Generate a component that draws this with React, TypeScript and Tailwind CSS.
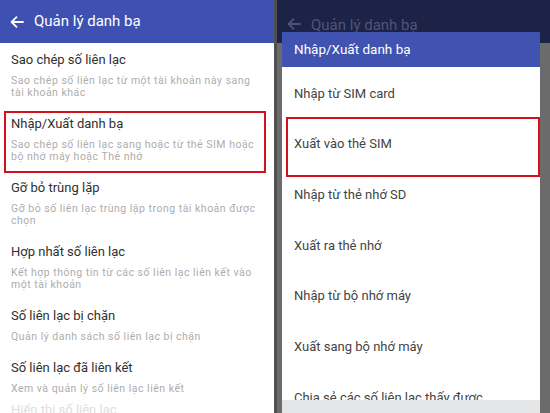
import React from "react";

const Arrow = ({ color }: { color: string }) => (
  <svg width="14" height="12" viewBox="0 0 14 12" fill="none">
    <path d="M13 6H2M6.5 1.2L1.6 6l4.9 4.8" stroke={color} strokeWidth="1.8" strokeLinecap="round" strokeLinejoin="round" />
  </svg>
);

const leftItems: { title: string; sub: string[]; boxed?: boolean }[] = [
  { title: "Sao chép số liên lạc", sub: ["Sao chép số liên lạc từ một tài khoản này sang", "tài khoản khác"] },
  { title: "Nhập/Xuất danh bạ", sub: ["Sao chép số liên lạc sang hoặc từ thẻ SIM hoặc", "bộ nhớ máy hoặc Thẻ nhớ"], boxed: true },
  { title: "Gỡ bỏ trùng lặp", sub: ["Gỡ bỏ số liên lạc trùng lặp trong tài khoản được", "chọn"] },
  { title: "Hợp nhất số liên lạc", sub: ["Kết hợp thông tin từ các số liên lạc liên kết vào", "một tài khoản"] },
  { title: "Số liên lạc bị chặn", sub: ["Quản lý danh sách số liên lạc bị chặn"] },
  { title: "Số liên lạc đã liên kết", sub: ["Xem và quản lý số liên lạc liên kết"] },
];

const dialogItems = [
  "Nhập từ SIM card",
  "Xuất vào thẻ SIM",
  "Nhập từ thẻ nhớ SD",
  "Xuất ra thẻ nhớ",
  "Nhập từ bộ nhớ máy",
  "Xuất sang bộ nhớ máy",
  "Chia sẻ các số liên lạc thấy được",
];

export default function App() {
  return (
    <div
      className="w-[550px] h-[413px] flex overflow-hidden"
      style={{ fontFamily: "Roboto, 'Noto Sans', sans-serif" }}
    >
      {/* Left screen */}
      <div className="w-[274px] h-full bg-white flex flex-col">
        <div className="h-[43px] bg-[#3e51b2] flex items-center pl-[10px] gap-[10px] shrink-0">
          <Arrow color="#ffffff" />
          <span className="text-white text-[15px]">Quản lý danh bạ</span>
        </div>
        <div className="flex flex-col pt-[7px]">
          {leftItems.map((it) => (
            <div key={it.title} className="relative pl-[11px] pr-[8px] pb-[15px]">
              {it.boxed && (
                <div className="absolute left-[4px] right-[8px] top-[-3px] bottom-[5px] border-2 border-[#d3101c]" />
              )}
              <div className="text-[13px] leading-[20px] text-[#303030] whitespace-nowrap">{it.title}</div>
              <div className="mt-[5px] flex flex-col">
                {it.sub.map((s) => (
                  <div key={s} className="text-[10.5px] leading-[12px] tracking-[0.5px] text-[#adadad] whitespace-nowrap">
                    {s}
                  </div>
                ))}
              </div>
            </div>
          ))}
          <div className="-mt-[10px] pl-[11px] text-[13px] leading-[20px] text-[#dedede]">Hiển thị số liên lạc</div>
        </div>
      </div>

      {/* separator */}
      <div className="w-[3px] h-full bg-[#505050]" />

      {/* Right screen (dimmed) */}
      <div className="flex-1 h-full relative bg-[#6b6b6b] flex flex-col">
        <div className="h-[43px] bg-[#1c2347] flex items-start pt-[18px] pl-[10px] gap-[10px] shrink-0">
          <Arrow color="#4e5578" />
          <span className="text-[#4f5676] text-[15px] leading-[14px]">Quản lý danh bạ</span>
        </div>

        {/* Dialog */}
        <div className="absolute left-[5px] top-[32px] w-[258px] bottom-0 bg-white flex flex-col overflow-hidden">
          <div className="h-[35px] bg-[#4053b1] flex items-center pl-[12px] shrink-0">
            <span className="text-white text-[13.5px]">Nhập/Xuất danh bạ</span>
          </div>
          <div className="flex flex-col pt-[1px]">
            {dialogItems.map((d, i) => (
              <div key={d} className="relative h-[50.7px] flex items-center pl-[12px]">
                {i === 1 && (
                  <div className="absolute left-[4px] right-0 top-[-2px] bottom-[-8px] border-2 border-[#d3101c]" />
                )}
                <span className="text-[13px] text-[#444444] whitespace-nowrap">{d}</span>
              </div>
            ))}
          </div>
          <div className="absolute left-0 right-0 bottom-0 h-[13px] bg-[#e4e6e8]" />
        </div>
      </div>
    </div>
  );
}
